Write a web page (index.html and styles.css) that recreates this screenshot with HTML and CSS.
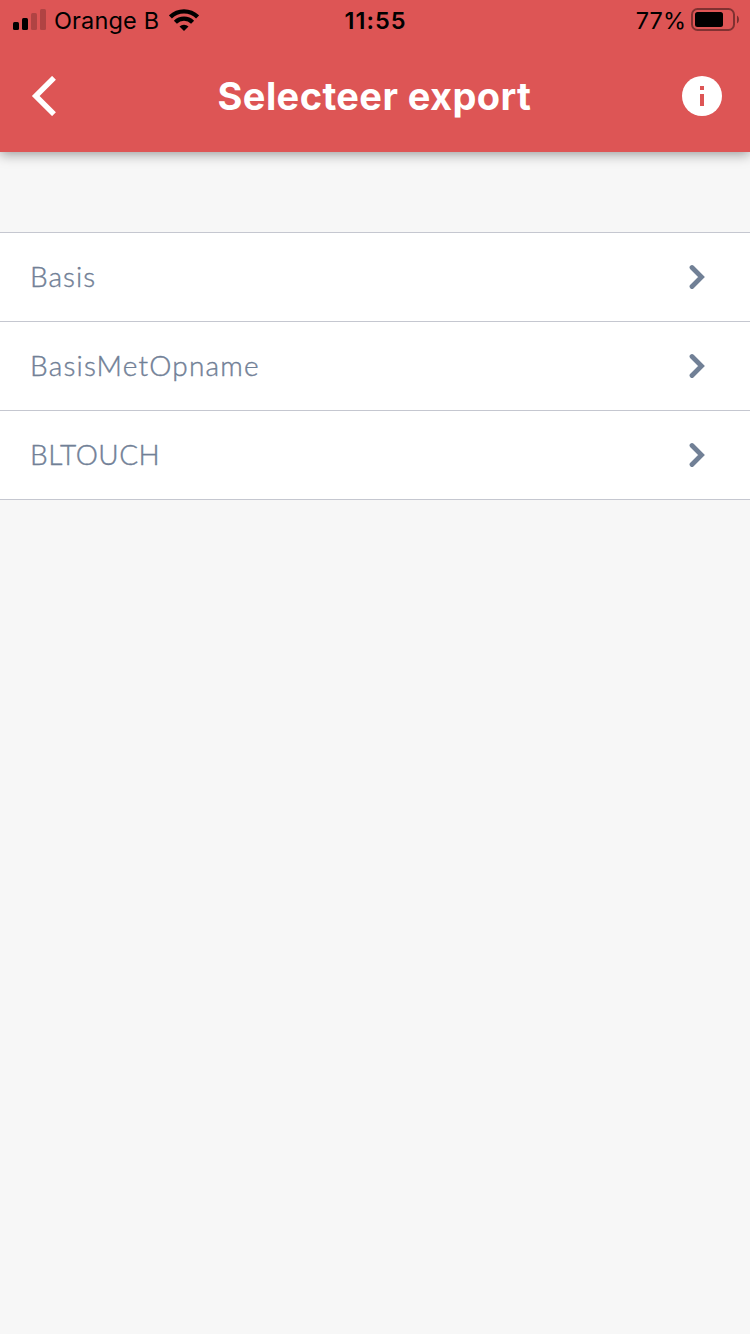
FILE: index.html
```html
<!DOCTYPE html>
<html lang="nl">
<head>
<meta charset="utf-8">
<title>Selecteer export</title>
<link rel="stylesheet" href="styles.css">
</head>
<body>
<header class="header">
  <div class="status">
    <div class="carrier">
      <svg class="signal" width="33" height="22" viewBox="0 0 33 22"><rect y="13" width="6" height="8" rx="1.5"/><rect x="9" y="9" width="6" height="12" rx="1.5"/><g opacity=".2"><rect x="18" y="4" width="6" height="17" rx="1.5"/><rect x="27" width="6" height="21" rx="1.5"/></g></svg>
      <span class="operator">Orange B</span>
      <svg class="wifi" width="30" height="22" viewBox="0 0 30 22"><g fill="none" stroke="#000" stroke-width="4.300"><path d="M1.400 8a19.400 19.400 0 0 1 27.200 0"/><path d="M6.400 13.200a12.200 12.200 0 0 1 17.200 0"/></g><path d="M15 22l-4.500-4.500a6.600 6.600 0 0 1 9 0z"/></svg>
    </div>
    <time class="time">11:55</time>
    <div class="power">
      <span class="percent">77%</span>
      <svg class="battery" width="48" height="23" viewBox="0 0 48 23"><rect x="1" y="1" width="42" height="21" rx="5.500" fill="none" stroke="#000" stroke-width="2" opacity=".42"/><rect x="4" y="4" width="28" height="15" rx="2.500"/><path d="M46 7.500c2.600 1.300 2.600 6.700 0 8z" opacity=".45"/></svg>
    </div>
  </div>
  <nav class="nav">
    <svg class="back" width="26" height="40" viewBox="0 0 26 40"><path d="M23 1.800L4.700 20 23 38.200" fill="none" stroke="#fff" stroke-width="5.400"/></svg>
    <h1 class="title">Selecteer export</h1>
    <svg class="info" width="40" height="40" viewBox="0 0 40 40"><circle cx="20" cy="20" r="20" fill="#fff"/><path d="M18 10h4v4h-4zM18 18h4v12h-4z" fill="#dd5555"/></svg>
  </nav>
</header>
<main class="list">
  <div class="row"><span class="label basis">Basis</span><svg class="chevron" width="16" height="26" viewBox="0 0 16 26"><path d="M3 3.500L12.500 13 3 22.500"/></svg></div>
  <div class="row"><span class="label opname">BasisMetOpname</span><svg class="chevron" width="16" height="26" viewBox="0 0 16 26"><path d="M3 3.500L12.500 13 3 22.500"/></svg></div>
  <div class="row"><span class="label touch">BLTOUCH</span><svg class="chevron" width="16" height="26" viewBox="0 0 16 26"><path d="M3 3.500L12.500 13 3 22.500"/></svg></div>
</main>
</body>
</html>
```

FILE: styles.css
```css
* { box-sizing: border-box; }
body { margin: 0; min-height: 1334px; background: #f7f7f7; font-family: Inter, sans-serif; }
svg { display: block; flex: none; }
.header { height: 152px; background: #dd5555; box-shadow: 0 2px 12px rgba(0, 0, 0, .4); }
.status { height: 40px; display: grid; grid-template-columns: 1fr auto 1fr; align-items: start; padding: 9px 11px 0 13px; font-size: 23.500px; line-height: 24px; color: #000; }
.carrier, .power { display: flex; }
.power { justify-content: flex-end; }
.battery { margin-top: -1px; }
.operator { width: 106px; margin-left: 8px; white-space: nowrap; letter-spacing: .15px; }
.wifi { margin-left: 9px; }
.time { font-weight: 600; letter-spacing: 1px; margin: 0 0 0 -1px; }
.percent { margin-right: 5px; }
.nav { height: 112px; display: grid; grid-template-columns: 1fr auto 1fr; align-items: center; padding: 0 28px 0 31px; }
.title { margin: 0 1px 0 -1px; padding-right: 2px; font-size: 38px; line-height: 48px; font-weight: 700; letter-spacing: .4px; color: #fff; white-space: nowrap; }
.info { justify-self: end; }
.list { margin-top: 80px; border-top: 1px solid #c5c7d0; }
.row { height: 89px; display: flex; align-items: center; justify-content: space-between; padding: 0 45px 0 30px; background: #fff; border-bottom: 1px solid #c5c7d0; }
.label { padding-bottom: 3px; font-family: Lato, sans-serif; font-weight: 300; font-size: 28px; line-height: 34px; letter-spacing: 1.200px; color: #718096; -webkit-text-stroke: .4px #718096; }
.basis { letter-spacing: 1px; }
.touch { letter-spacing: .5px; }
.chevron path { fill: none; stroke: #718096; stroke-width: 4.800; stroke-linecap: round; }
```
